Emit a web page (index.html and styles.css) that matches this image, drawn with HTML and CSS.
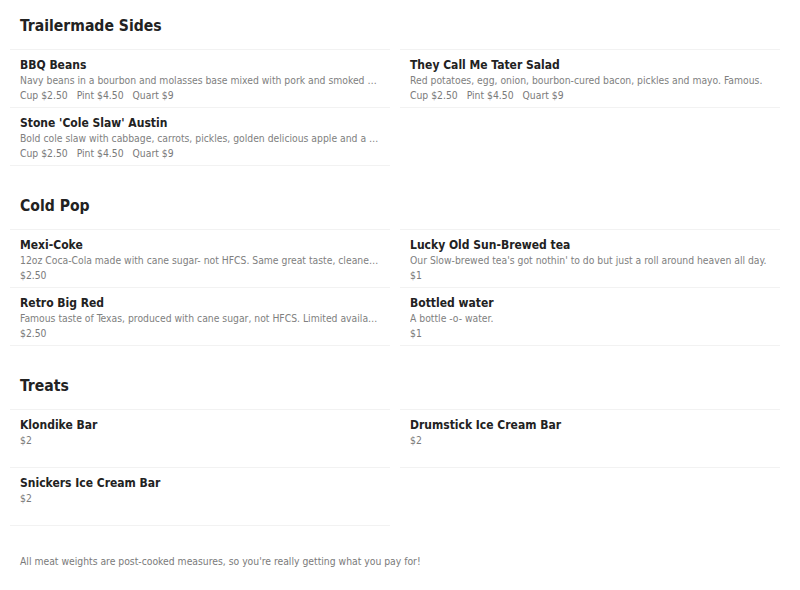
FILE: index.html
```html
<!DOCTYPE html>
<html lang="en">
<head>
<meta charset="utf-8">
<title>Menu</title>
<link rel="stylesheet" href="styles.css">
</head>
<body>
<main class="menu">
  <section class="section">
    <h2 class="section-title">Trailermade Sides</h2>
    <div class="items">
      <div class="item">
        <div class="item-name">BBQ Beans</div>
        <div class="item-desc">Navy beans in a bourbon and molasses base mixed with pork and smoked onions. Slow-cooked for hours.</div>
        <div class="item-prices"><span>Cup $2.50</span><span>Pint $4.50</span><span>Quart $9</span></div>
      </div>
      <div class="item">
        <div class="item-name">They Call Me Tater Salad</div>
        <div class="item-desc">Red potatoes, egg, onion, bourbon-cured bacon, pickles and mayo. Famous.</div>
        <div class="item-prices"><span>Cup $2.50</span><span>Pint $4.50</span><span>Quart $9</span></div>
      </div>
      <div class="item">
        <div class="item-name">Stone 'Cole Slaw' Austin</div>
        <div class="item-desc">Bold cole slaw with cabbage, carrots, pickles, golden delicious apple and a touch of heat.</div>
        <div class="item-prices"><span>Cup $2.50</span><span>Pint $4.50</span><span>Quart $9</span></div>
      </div>
    </div>
  </section>

  <section class="section">
    <h2 class="section-title">Cold Pop</h2>
    <div class="items">
      <div class="item">
        <div class="item-name">Mexi-Coke</div>
        <div class="item-desc">12oz Coca-Cola made with cane sugar- not HFCS. Same great taste, cleaner finish.</div>
        <div class="item-prices"><span>$2.50</span></div>
      </div>
      <div class="item">
        <div class="item-name">Lucky Old Sun-Brewed tea</div>
        <div class="item-desc">Our Slow-brewed tea's got nothin' to do but just a roll around heaven all day.</div>
        <div class="item-prices"><span>$1</span></div>
      </div>
      <div class="item">
        <div class="item-name">Retro Big Red</div>
        <div class="item-desc">Famous taste of Texas, produced with cane sugar, not HFCS. Limited availability.</div>
        <div class="item-prices"><span>$2.50</span></div>
      </div>
      <div class="item">
        <div class="item-name">Bottled water</div>
        <div class="item-desc">A bottle -o- water.</div>
        <div class="item-prices"><span>$1</span></div>
      </div>
    </div>
  </section>

  <section class="section">
    <h2 class="section-title">Treats</h2>
    <div class="items">
      <div class="item">
        <div class="item-name">Klondike Bar</div>
        <div class="item-prices"><span>$2</span></div>
      </div>
      <div class="item">
        <div class="item-name">Drumstick Ice Cream Bar</div>
        <div class="item-prices"><span>$2</span></div>
      </div>
      <div class="item">
        <div class="item-name">Snickers Ice Cream Bar</div>
        <div class="item-prices"><span>$2</span></div>
      </div>
    </div>
  </section>

  <p class="note">All meat weights are post-cooked measures, so you're really getting what you pay for!</p>
</main>
</body>
</html>
```

FILE: styles.css
```css
html, body {
  margin: 0;
  padding: 0;
  background: #ffffff;
}

body {
  font-family: "DejaVu Sans Condensed", "DejaVu Sans", sans-serif;
  font-stretch: condensed;
  color: #222222;
}

.menu {
  display: flex;
  flex-direction: column;
  gap: 31px;
  padding: 16px 20px 0 10px;
}

.section {
  display: flex;
  flex-direction: column;
}

.section-title {
  margin: 0 0 13px 10px;
  font-size: 15.6px;
  line-height: 20px;
  font-weight: bold;
  color: #222222;
}

.items {
  display: grid;
  grid-template-columns: 1fr 1fr;
  column-gap: 10px;
}

.item {
  display: flex;
  flex-direction: column;
  min-height: 46px;
  padding: 7px 10px 4px;
  border-top: 1px solid #f2f2f2;
  border-bottom: 1px solid #f2f2f2;
  margin-bottom: -1px;
  min-width: 0;
}

.item-name {
  font-size: 12px;
  line-height: 16px;
  font-weight: bold;
  color: #222222;
}

.item-desc {
  font-size: 10.3px;
  line-height: 15px;
  color: #808080;
  white-space: nowrap;
  overflow: hidden;
  text-overflow: ellipsis;
}

.item-prices {
  display: flex;
  gap: 9px;
  font-size: 10.3px;
  line-height: 15px;
  color: #7a7a7a;
}

.note {
  margin: -2px 0 0 10px;
  font-size: 10.3px;
  line-height: 15px;
  color: #7a7a7a;
}
```
